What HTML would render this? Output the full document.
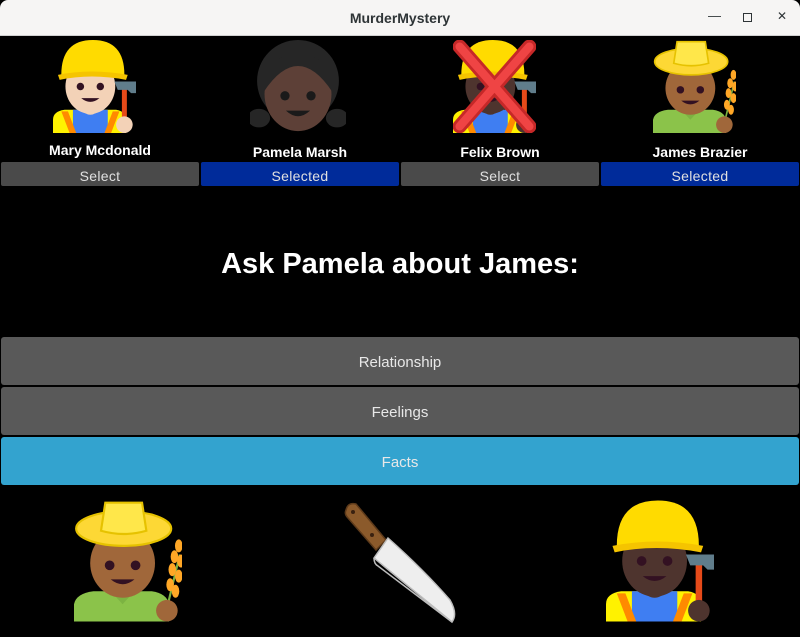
<!DOCTYPE html>
<html><head><meta charset="utf-8"><style>
*{margin:0;padding:0;box-sizing:border-box}
body{width:800px;height:637px;background:#000;font-family:"Liberation Sans",sans-serif;overflow:hidden;position:relative}
.tb{position:absolute;left:0;top:0;width:800px;height:36px;background:#f6f5f4;border-bottom:1px solid #d0d0d0;border-radius:8px 8px 0 0}
.tb .t{position:absolute;left:0;right:0;top:10px;text-align:center;font-weight:bold;font-size:14px;color:#2e3436}
.ab{position:absolute;font-size:13px;color:#2e3436}
.name{position:absolute;width:200px;text-align:center;color:#fff;font-weight:bold;font-size:14px}
.sb{position:absolute;top:162px;height:24px;width:198px;border-radius:2px;color:#e0e0e0;font-size:14px;text-align:center;line-height:29px;letter-spacing:.3px}
.g{background:#4a4a4a}.bl{background:#002b9a}
h1{position:absolute;top:248px;left:0;width:800px;text-align:center;color:#fff;font-size:29px;font-weight:bold}
.big{position:absolute;left:1px;width:798px;height:48px;border-radius:3px;color:#e8e8e8;font-size:15px;text-align:center;line-height:52px}
svg{position:absolute}
</style></head><body>
<div class="tb"><div class="t">MurderMystery</div>
<div class="ab" style="left:708px;top:8px">&#8212;</div>
<div style="position:absolute;left:743px;top:13px;width:9px;height:9px;border:1.5px solid #2e3436"></div>
<div class="ab" style="left:777px;top:9px;font-size:12px">&#10005;</div></div>

<svg width="0" height="0"><defs>
<g id="worker">
<path d="M0 112 V96 Q0 86 14 84 H76 Q88 86 88 96 V112Z" fill="#fff200"/>
<path d="M24 84 H66 V112 H24Z" fill="#3f7ef2"/>
<path d="M10 86 L20 112 H28 L18 86Z M80 86 L70 112 H62 L72 86Z" fill="#ff8a00"/>
<path d="M32 82 Q45 98 58 82Z" fill="var(--s)"/>
<ellipse cx="45" cy="56" rx="30" ry="33" fill="var(--s)"/>
<circle cx="33" cy="56" r="4.5" fill="#312"/><circle cx="57" cy="56" r="4.5" fill="#312"/>
<path d="M34 70 Q45 79 56 70Z" fill="#312"/>
<path d="M10 42 Q10 0 48 0 Q86 0 86 42Z" fill="#ffdb00"/>
<path d="M6 42 Q46 34 90 42 L88 48 Q46 40 8 48Z" fill="#f5c400"/>
<rect x="83" y="54" width="6" height="46" fill="#e64a19"/>
<path d="M74 50 H100 V64 H94 L90 60 H78Z" fill="#607d8b"/>
<circle cx="86" cy="102" r="10" fill="var(--s)"/>
</g>
<g id="farmer">
<path d="M0 112 V96 Q2 86 18 84 H72 Q86 86 88 96 V112Z" fill="#8bc34a"/>
<path d="M34 84 L45 96 L56 84Z" fill="#7cb342"/>
<ellipse cx="45" cy="58" rx="30" ry="32" fill="var(--s)"/>
<circle cx="33" cy="60" r="4.5" fill="#312"/><circle cx="57" cy="60" r="4.5" fill="#312"/>
<path d="M34 73 Q45 82 56 73Z" fill="#312"/>
<ellipse cx="46" cy="26" rx="44" ry="16" fill="#fdd835" stroke="#e6c200" stroke-width="2"/>
<path d="M29 2 H63 L67 28 Q46 34 25 28Z" fill="#ffe74a" stroke="#e6c200" stroke-width="2"/>
<path d="M86 100 L98 50" stroke="#7cb342" stroke-width="2"/>
<g fill="#ffa726"><ellipse cx="97" cy="42" rx="3.5" ry="6"/><ellipse cx="93" cy="52" rx="3.5" ry="6"/><ellipse cx="99" cy="56" rx="3.5" ry="6"/><ellipse cx="91" cy="64" rx="3.5" ry="6"/><ellipse cx="97" cy="70" rx="3.5" ry="6"/><ellipse cx="89" cy="78" rx="3.5" ry="6"/><ellipse cx="94" cy="84" rx="3.5" ry="6"/></g>
<circle cx="86" cy="102" r="10" fill="var(--s)"/>
</g>
</defs></svg>

<svg style="left:53px;top:40px;--s:#f3d2b7" width="83" height="93" viewBox="0 0 100 112"><use href="#worker"/></svg>
<svg style="left:250px;top:40px" width="96" height="93" viewBox="0 0 100 100">
<circle cx="50" cy="44" r="44" fill="#262626"/><ellipse cx="8" cy="84" rx="12" ry="10" fill="#262626"/><ellipse cx="92" cy="84" rx="12" ry="10" fill="#262626"/>
<ellipse cx="50" cy="58" rx="36" ry="40" fill="#5d4037"/><path d="M13 56 Q50 0 87 56 Q88 18 50 14 Q12 18 13 56Z" fill="#262626"/>
<circle cx="36" cy="60" r="5" fill="#1a1a1a"/><circle cx="64" cy="60" r="5" fill="#1a1a1a"/><path d="M37 76 Q50 88 63 76Z" fill="#1a1a1a"/></svg>
<svg style="left:453px;top:40px;--s:#4e342e" width="83" height="93" viewBox="0 0 100 112"><use href="#worker"/>
<path d="M8 8 L92 104 M92 8 L8 104" stroke="#c62828" stroke-width="17" stroke-linecap="round"/>
<path d="M8 8 L92 104 M92 8 L8 104" stroke="#ef4444" stroke-width="10" stroke-linecap="round"/></svg>
<svg style="left:653px;top:40px;--s:#a0673a" width="83" height="93" viewBox="0 0 100 112"><use href="#farmer"/></svg>

<div class="name" style="left:0;top:142px">Mary Mcdonald</div>
<div class="name" style="left:200px;top:144px">Pamela Marsh</div>
<div class="name" style="left:400px;top:144px">Felix Brown</div>
<div class="name" style="left:600px;top:144px">James Brazier</div>
<div class="sb g" style="left:1px">Select</div>
<div class="sb bl" style="left:201px">Selected</div>
<div class="sb g" style="left:401px">Select</div>
<div class="sb bl" style="left:601px">Selected</div>

<h1>Ask Pamela about James:</h1>
<div class="big" style="top:337px;background:#595959">Relationship</div>
<div class="big" style="top:387px;background:#595959">Feelings</div>
<div class="big" style="top:437px;background:#33a3cf">Facts</div>

<svg style="left:74px;top:500px;--s:#a0673a" width="108" height="122" viewBox="0 0 100 112"><use href="#farmer"/></svg>
<svg style="left:340px;top:500px" width="120" height="124" viewBox="0 0 120 124">
<path d="M6 10 Q8 2 16 4 L46 40 L36 50 L8 18 Q4 14 6 10Z" fill="#8b5a2b" stroke="#5d3a1a" stroke-width="1.5"/>
<circle cx="13" cy="12" r="2" fill="#3a2110"/><circle cx="32" cy="35" r="2" fill="#3a2110"/>
<path d="M34 58 L48 38 Q84 70 110 100 Q118 114 112 122 Z" fill="#eeeeee" stroke="#bdbdbd" stroke-width="1.5"/>
<path d="M34 58 Q34 64 38 66 L112 122" fill="none" stroke="#bdbdbd" stroke-width="1.5"/></svg>
<svg style="left:606px;top:500px;--s:#4e342e" width="108" height="122" viewBox="0 0 100 112"><use href="#worker"/></svg>
</body></html>
